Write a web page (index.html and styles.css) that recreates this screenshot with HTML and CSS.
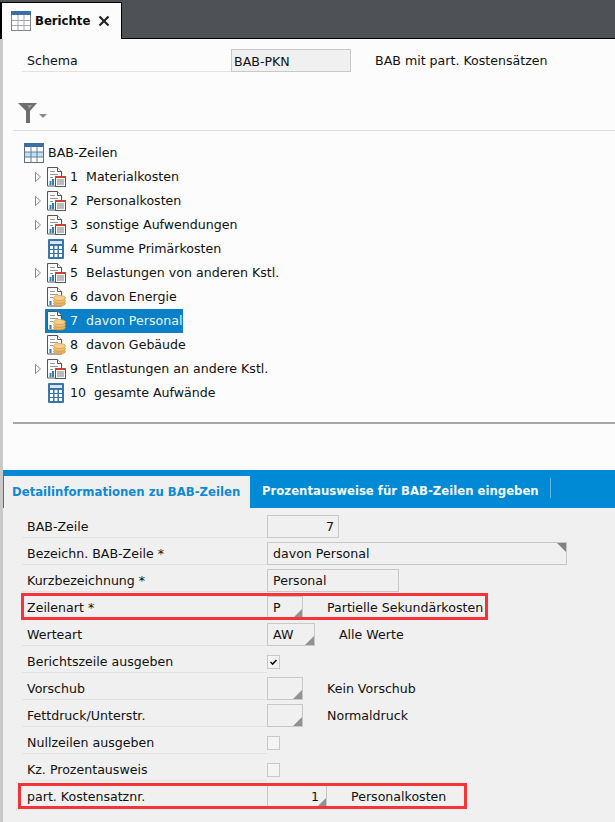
FILE: index.html
```html
<!DOCTYPE html>
<html lang="de">
<head>
<meta charset="utf-8">
<title>Berichte</title>
<link rel="stylesheet" href="styles.css">
</head>
<body>
<svg class="defs" width="0" height="0" aria-hidden="true">
  <defs>
    <symbol id="i-table" viewBox="0 0 20 20">
      <rect x="0.5" y="0.5" width="19" height="19" fill="#fff" stroke="#7c8288"/>
      <rect x="0" y="0" width="20" height="4" fill="#3b6ea5"/>
      <path d="M7 4v15.500M13 4v15.500M1 9.500h18M1 14.500h18" stroke="#a4a8ac" fill="none"/>
    </symbol>
    <symbol id="i-table2" viewBox="0 0 20 20">
      <rect x="0.5" y="0.5" width="19" height="19" fill="#fff" stroke="#5f6f80"/>
      <rect x="0" y="0" width="20" height="4" fill="#3b6ea5"/>
      <rect x="1" y="9" width="18" height="5" fill="#bfe0f5"/>
      <path d="M7 4v15.500M13 4v15.500M1 9h18M1 14h18" stroke="#5f7f9f" fill="none"/>
    </symbol>
    <symbol id="i-doc" viewBox="0 0 20 20">
      <path d="M1.500 .5h10l4 4v14.500h-14z" fill="#fff" stroke="#555"/>
      <path d="M11.500 .5v4h4" fill="#fff" stroke="#555"/>
      <path d="M4 4.500h5M4 7.500h8M4 10.500h3" stroke="#9a9a9a" fill="none"/>
      <rect x="3.500" y="14" width="2" height="4" fill="#2f7fc4"/>
      <rect x="6" y="12" width="2" height="6" fill="#2f7fc4"/>
      <rect x="9.500" y="9.500" width="10" height="10" fill="#fff" stroke="#555"/>
      <rect x="9" y="9" width="11" height="2" fill="#c8442c"/>
      <path d="M11 13h7M11 15h7M11 17h7" stroke="#777" fill="none"/>
    </symbol>
    <symbol id="i-calc" viewBox="0 0 20 20">
      <rect x="2" y="0" width="16" height="20" rx="1" fill="#3a74ad"/>
      <rect x="4" y="2" width="12" height="3" fill="#d9e6f2"/>
      <path d="M4 7h3v3H4zM8.500 7h3v3h-3zM13 7h3v3h-3zM4 11h3v3H4zM8.500 11h3v3h-3zM13 11h3v3h-3zM4 15h3v3H4zM8.500 15h3v3h-3zM13 15h3v3h-3z" fill="#fff"/>
    </symbol>
    <symbol id="i-coin" viewBox="0 0 20 20">
      <path d="M1.500 .5h10l4 4v14.500h-14z" fill="#fff" stroke="#555"/>
      <path d="M11.500 .5v4h4" fill="#fff" stroke="#555"/>
      <path d="M4 4.500h5M4 7.500h8M4 10.500h3" stroke="#9a9a9a" fill="none"/>
      <rect x="3.500" y="14" width="2" height="4" fill="#2f7fc4"/>
      <ellipse cx="13.500" cy="16.500" rx="6" ry="2.500" fill="#e8b25c" stroke="#d09840" stroke-width=".7"/>
      <ellipse cx="13.500" cy="13.800" rx="6" ry="2.500" fill="#efc078" stroke="#d09840" stroke-width=".7"/>
      <ellipse cx="13.500" cy="11" rx="6" ry="2.500" fill="#f5d090" stroke="#d09840" stroke-width=".7"/>
    </symbol>
  </defs>
</svg>

<header class="topbar">
  <div class="tab">
    <svg class="tab-icon"><use href="#i-table"/></svg>
    <span class="tab-title">Berichte</span>
    <svg class="tab-close" viewBox="0 0 12 12"><path d="M1.500 1.500l9 9M10.500 1.500l-9 9" stroke="#222" stroke-width="2.200" fill="none"/></svg>
  </div>
</header>

<main class="page">
  <section class="upper">
    <div class="schema">
      <span class="schema-label">Schema</span>
      <span class="field schema-field">BAB-PKN</span>
      <span class="schema-desc">BAB mit part. Kostensätzen</span>
    </div>
    <div class="filter">
      <svg class="filter-icon" viewBox="0 0 24 20">
        <path d="M0 0h19l-7 8v12H8V8z" fill="#6e6e6e"/>
        <path d="M10 2h4l-3 4z" fill="#a0a0a0"/>
        <path d="M21 11h8l-4 4z" fill="#8a8a8a"/>
      </svg>
    </div>
    <div class="tree">
      <div class="node root"><svg class="ico root-ico"><use href="#i-table2"/></svg><span class="txt">BAB-Zeilen</span></div>
      <div class="node"><svg class="exp" viewBox="0 0 6 10"><path d="M.5 .5l5 4.500-5 4.500z" fill="#fff" stroke="#888"/></svg><svg class="ico"><use href="#i-doc"/></svg><span class="txt">1  Materialkosten</span></div>
      <div class="node"><svg class="exp" viewBox="0 0 6 10"><path d="M.5 .5l5 4.500-5 4.500z" fill="#fff" stroke="#888"/></svg><svg class="ico"><use href="#i-doc"/></svg><span class="txt">2  Personalkosten</span></div>
      <div class="node"><svg class="exp" viewBox="0 0 6 10"><path d="M.5 .5l5 4.500-5 4.500z" fill="#fff" stroke="#888"/></svg><svg class="ico"><use href="#i-doc"/></svg><span class="txt">3  sonstige Aufwendungen</span></div>
      <div class="node leaf"><svg class="ico"><use href="#i-calc"/></svg><span class="txt">4  Summe Primärkosten</span></div>
      <div class="node"><svg class="exp" viewBox="0 0 6 10"><path d="M.5 .5l5 4.500-5 4.500z" fill="#fff" stroke="#888"/></svg><svg class="ico"><use href="#i-doc"/></svg><span class="txt">5  Belastungen von anderen Kstl.</span></div>
      <div class="node leaf"><svg class="ico"><use href="#i-coin"/></svg><span class="txt">6  davon Energie</span></div>
      <div class="node leaf"><div class="sel"><svg class="ico"><use href="#i-coin"/></svg><span class="txt">7  davon Personal</span></div></div>
      <div class="node leaf"><svg class="ico"><use href="#i-coin"/></svg><span class="txt">8  davon Gebäude</span></div>
      <div class="node"><svg class="exp" viewBox="0 0 6 10"><path d="M.5 .5l5 4.500-5 4.500z" fill="#fff" stroke="#888"/></svg><svg class="ico"><use href="#i-doc"/></svg><span class="txt">9  Entlastungen an andere Kstl.</span></div>
      <div class="node leaf"><svg class="ico"><use href="#i-calc"/></svg><span class="txt">10  gesamte Aufwände</span></div>
    </div>
  </section>

  <section class="detail">
    <nav class="tabs">
      <span class="dtab active">Detailinformationen zu BAB-Zeilen</span>
      <span class="dtab other">Prozentausweise für BAB-Zeilen eingeben</span>
    </nav>
    <div class="form">
      <div class="row"><span class="label">BAB-Zeile</span><span class="field f-72 right">7</span></div>
      <div class="row"><span class="label">Bezeichn. BAB-Zeile *</span><span class="field f-300 corner-top">davon Personal</span></div>
      <div class="row"><span class="label">Kurzbezeichnung *</span><span class="field f-132">Personal</span></div>
      <div class="row"><span class="label">Zeilenart *</span><span class="field f-36 drop">P</span><span class="desc">Partielle Sekundärkosten</span><i class="redbox box-a"></i></div>
      <div class="row"><span class="label">Werteart</span><span class="field f-48 drop">AW</span><span class="desc">Alle Werte</span></div>
      <div class="row"><span class="label">Berichtszeile ausgeben</span><span class="check"><svg viewBox="0 0 13 13"><path d="M3 6.500l2.500 2.500L10 4" stroke="#111" stroke-width="1.800" fill="none"/></svg></span></div>
      <div class="row"><span class="label">Vorschub</span><span class="field f-36 drop"></span><span class="desc">Kein Vorschub</span></div>
      <div class="row"><span class="label">Fettdruck/Unterstr.</span><span class="field f-36 drop"></span><span class="desc">Normaldruck</span></div>
      <div class="row"><span class="label">Nullzeilen ausgeben</span><span class="check"></span></div>
      <div class="row"><span class="label">Kz. Prozentausweis</span><span class="check"></span></div>
      <div class="row"><span class="label">part. Kostensatznr.</span><span class="field f-60 right drop">1</span><span class="desc">Personalkosten</span><i class="redbox box-b"></i></div>
    </div>
  </section>
</main>
</body>
</html>
```

FILE: styles.css
```css
* { box-sizing: border-box; }
html, body { margin: 0; padding: 0; }
body {
  width: 615px;
  height: 822px;
  overflow: hidden;
  background: #fcfcfc;
  color: #111;
  font: 12.6px/16px "DejaVu Sans", Verdana, sans-serif;
}
.defs { position: absolute; }

.topbar {
  height: 39px;
  padding-top: 2px;
  background: #4e5155;
  border-bottom: 1px solid #000;
}
.tab {
  width: 122px;
  height: 37px;
  display: flex;
  align-items: center;
  padding: 0 0 0 9px;
  background: #fcfcfc;
  border: 1px solid #000;
  border-bottom: 0;
  border-left-width: 2px;
}
.tab-icon { width: 20px; height: 20px; flex: none; }
.tab-title { margin-left: 4px; font-weight: bold; font-size: 11.7px; color: #0b0b0b; }
.tab-close { width: 12px; height: 12px; margin-left: 8px; flex: none; }

.page {
  height: 783px;
  border-left: 3px solid #c9c9c9;
}
.upper { height: 431px; padding-top: 10px; }
.schema {
  display: flex;
  align-items: flex-start;
  height: 33px;
  margin-left: 19px;
}
.schema-label {
  width: 209px;
  height: 23px;
  padding: 4px 0 0 5px;
  border-bottom: 1px solid #e2e2e2;
}
.schema-field { width: 120px; height: 23px; background: #f0f0f0; }
.schema-desc { margin-left: 24px; padding-top: 4px; }

.filter { height: 48px; padding: 21px 0 0 15px; }
.filter-icon { width: 24px; height: 20px; display: block; overflow: visible; }

.tree {
  margin-left: 10px;
  height: 294px;
  padding: 10px 0 0 0;
  border-top: 1px solid #dcdcdc;
  border-bottom: 2px solid #a8a8a8;
}
.node {
  height: 24px;
  display: flex;
  align-items: center;
  padding-left: 22px;
  white-space: pre;
}
.node.root { padding-left: 0; }
.node .exp { width: 6px; height: 10px; flex: none; }
.node .ico { width: 20px; height: 20px; flex: none; margin-left: 5px; }
.node.leaf { padding-left: 28px; }
.node .txt { margin-left: 4px; }
.node.root .ico { margin-left: 11px; }
.sel {
  display: flex;
  align-items: center;
  height: 24px;
  width: 138px;
  margin-left: 4px;
  background: #0a80c9;
  color: #e9f5fc;
}
.node .sel .ico { margin-left: 1px; }

.detail { height: 352px; background: #f0f0f0; padding-top: 45px; position: relative; }
.tabs {
  position: absolute;
  left: 0;
  right: 0;
  top: 0;
  height: 38px;
  display: flex;
  align-items: flex-start;
  background: #0089d4;
  padding-left: 1px;
}
.dtab {
  font-weight: bold;
  font-size: 11.7px;
  white-space: nowrap;
}
.dtab.active {
  width: 246px;
  height: 32px;
  margin-top: 6px;
  padding: 8px 0 0 8px;
  background: #f0f0f0;
  color: #0f88d6;
}
.dtab.other {
  height: 20px;
  margin-top: 8px;
  padding: 5px 11px 0 12px;
  color: #f2f8fc;
  border-right: 1px solid #66b8e5;
}

.form { padding-left: 19px; }
.row {
  position: relative;
  display: flex;
  height: 27px;
  align-items: flex-start;
}
.label {
  flex: none;
  width: 245px;
  height: 23px;
  padding: 4px 0 0 5px;
  border-bottom: 1px solid #e2e2e2;
}
.field {
  display: block;
  flex: none;
  position: relative;
  height: 23px;
  padding: 3px 4px 0 5px;
  border: 1px solid #c8c8c8;
  background: #f0f0f0;
  white-space: nowrap;
}
.schema .field { padding-left: 2px; padding-top: 4px; }
.f-36 { width: 36px; }
.f-48 { width: 48px; }
.f-60 { width: 60px; padding-right: 7px; }
.f-72 { width: 72px; }
.f-132 { width: 132px; }
.f-300 { width: 300px; }
.right { text-align: right; }
.drop::after {
  content: "";
  position: absolute;
  right: 0;
  bottom: 0;
  border-style: solid;
  border-width: 0 0 9px 9px;
  border-color: transparent transparent #8f9193 transparent;
}
.corner-top::after {
  content: "";
  position: absolute;
  right: 0;
  top: 0;
  border-style: solid;
  border-width: 9px 0 0 9px;
  border-color: transparent;
  border-top-color: #808284;
}
.desc { margin-left: 24px; padding-top: 4px; white-space: nowrap; }
.check {
  flex: none;
  width: 13px;
  height: 14px;
  margin-top: 5px;
  border: 1px solid #c8c8c8;
  background: #f4f4f4;
}
.check svg { display: block; width: 11px; height: 12px; }
.redbox {
  position: absolute;
  border: 3px solid #f53338;
  pointer-events: none;
}
.box-a { top: -3px; left: -1px; width: 467px; height: 27px; }
.box-b { top: -2px; left: -4px; width: 449px; height: 26px; }
```
